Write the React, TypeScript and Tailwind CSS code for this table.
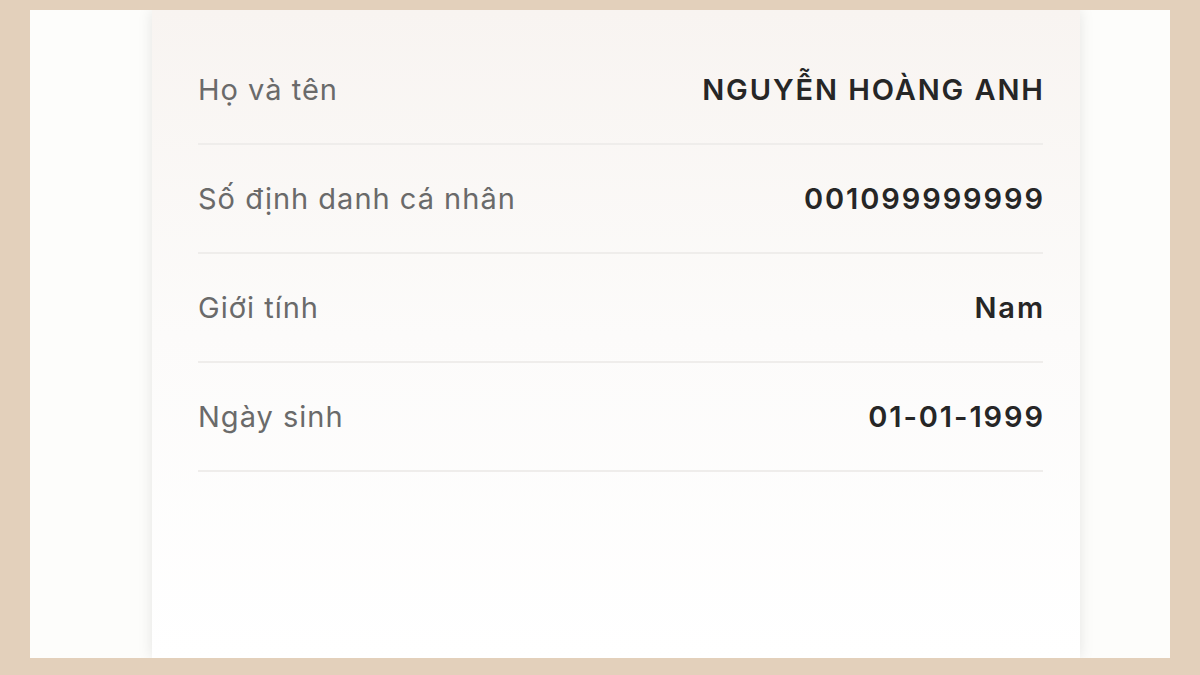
import React from "react";

const rows = [
  { label: "Họ và tên", value: "NGUYỄN HOÀNG ANH" },
  { label: "Số định danh cá nhân", value: "001099999999" },
  { label: "Giới tính", value: "Nam" },
  { label: "Ngày sinh", value: "01-01-1999" },
];

export default function App() {
  return (
    <div
      className="w-[1200px] h-[675px] bg-[#e3d0bb] pt-[10px] pb-[17px] px-[30px]"
      style={{ fontFamily: 'Inter, "Liberation Sans", Arial, sans-serif' }}
    >
      <div className="h-full w-full bg-[#fdfdfb] flex justify-start pl-[122px] overflow-hidden">
        <div className="w-[928px] h-full bg-gradient-to-b from-[#f8f4f1] via-[#fcfbfa] to-white shadow-[0_0_14px_rgba(0,0,0,0.10)] pt-[26px] pl-[46px] pr-[37px]">
          {rows.map((r) => (
            <div
              key={r.label}
              className="h-[109px] flex items-center justify-between border-b-2 border-[#efedeb]"
            >
              <span className="text-[29px] text-[#6a6a6a] tracking-[1px]">{r.label}</span>
              <span className="text-[29px] font-semibold text-[#262626] tracking-[1.9px] mr-[-1.9px]">
                {r.value}
              </span>
            </div>
          ))}
        </div>
      </div>
    </div>
  );
}
